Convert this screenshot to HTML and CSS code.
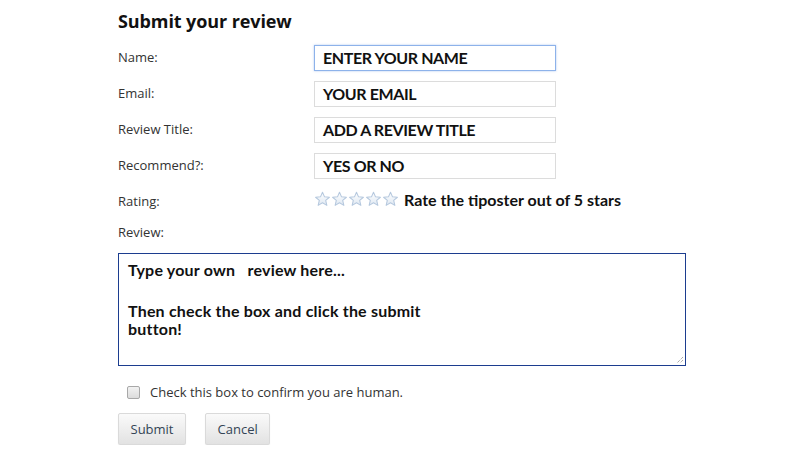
FILE: index.html
```html
<!DOCTYPE html>
<html>
<head>
<meta charset="utf-8">
<link rel="stylesheet" href="styles.css">
</head>
<body>
<form class="review-form">
  <h2 class="title">Submit your review</h2>
  <div class="fields">
    <label class="lbl">Name:</label>
    <div class="inp inp-focus">ENTER YOUR NAME</div>
    <label class="lbl">Email:</label>
    <div class="inp">YOUR EMAIL</div>
    <label class="lbl">Review Title:</label>
    <div class="inp">ADD A REVIEW TITLE</div>
    <label class="lbl">Recommend?:</label>
    <div class="inp">YES OR NO</div>
    <label class="lbl">Rating:</label>
    <div class="rating">
      <span class="stars">
        <svg viewBox="0 0 16 16" class="star"><defs><linearGradient id="sg" x1="0" y1="0" x2="0" y2="1"><stop offset="0" stop-color="#ffffff"/><stop offset="1" stop-color="#dfe8f2"/></linearGradient></defs><path d="M8 1.2l1.9 4.3 4.6.4-3.5 3 1.1 4.6L8 11.1l-4.1 2.4 1.1-4.6-3.5-3 4.6-.4z" fill="url(#sg)" stroke="#b5c8de" stroke-width="1" stroke-linejoin="round"/></svg>
        <svg viewBox="0 0 16 16" class="star"><path d="M8 1.2l1.9 4.3 4.6.4-3.5 3 1.1 4.6L8 11.1l-4.1 2.4 1.1-4.6-3.5-3 4.6-.4z" fill="url(#sg)" stroke="#b5c8de" stroke-width="1" stroke-linejoin="round"/></svg>
        <svg viewBox="0 0 16 16" class="star"><path d="M8 1.2l1.9 4.3 4.6.4-3.5 3 1.1 4.6L8 11.1l-4.1 2.4 1.1-4.6-3.5-3 4.6-.4z" fill="url(#sg)" stroke="#b5c8de" stroke-width="1" stroke-linejoin="round"/></svg>
        <svg viewBox="0 0 16 16" class="star"><path d="M8 1.2l1.9 4.3 4.6.4-3.5 3 1.1 4.6L8 11.1l-4.1 2.4 1.1-4.6-3.5-3 4.6-.4z" fill="url(#sg)" stroke="#b5c8de" stroke-width="1" stroke-linejoin="round"/></svg>
        <svg viewBox="0 0 16 16" class="star"><path d="M8 1.2l1.9 4.3 4.6.4-3.5 3 1.1 4.6L8 11.1l-4.1 2.4 1.1-4.6-3.5-3 4.6-.4z" fill="url(#sg)" stroke="#b5c8de" stroke-width="1" stroke-linejoin="round"/></svg>
      </span>
      <span class="rate-text">Rate the tiposter out of 5 stars</span>
    </div>
  </div>
  <div class="lbl review-lbl">Review:</div>
  <div class="textarea">
    <div>Type your own&nbsp;&nbsp; review here...</div>
    <div class="blank">&nbsp;</div>
    <div>Then check the box and click the submit</div>
    <div>button!</div>
    <svg class="grip" viewBox="0 0 10 10"><path d="M9 3L3 9M9 6L6 9" stroke="#888" stroke-width="1" stroke-dasharray="1 1"/></svg>
  </div>
  <div class="check-row">
    <span class="checkbox"></span>
    <span class="check-text">Check this box to confirm you are human.</span>
  </div>
  <div class="buttons">
    <span class="btn">Submit</span>
    <span class="btn">Cancel</span>
  </div>
</form>
</body>
</html>
```
FILE: styles.css
```css
html, body { margin: 0; padding: 0; background: #fff; }
body { font-family: "Open Sans", "DejaVu Sans", sans-serif; }
.review-form { margin-left: 118px; width: 568px; padding-top: 9px; }
.title { margin: 0 0 12px 0; font-size: 18px; line-height: 24px; font-weight: 700; color: #111; letter-spacing: -0.1px; }
.fields { display: grid; grid-template-columns: 196px 242px; grid-auto-rows: 26px; row-gap: 10px; align-items: center; }
.lbl { font-size: 13px; color: #333; line-height: 18px; padding-bottom: 3px; }
.inp { box-sizing: border-box; height: 26px; border: 1px solid #dcdcdc; padding: 0 0 1px 8px; display: flex; align-items: center; font-family: "Lato", sans-serif; font-weight: 700; font-size: 16px; color: #111; letter-spacing: -0.4px; }
.inp-focus { border-color: #8db2ea; box-shadow: 0 0 2px rgba(120,160,230,0.6); }
.rating { display: flex; align-items: center; gap: 5px; margin-top: -6px; white-space: nowrap; }
.stars { display: flex; gap: 0; }
.star { width: 17px; height: 17px; display: block; }
.rate-text { font-family: "Lato", sans-serif; font-weight: 700; font-size: 16px; color: #111; }
.review-lbl { margin-top: 8px; }
.textarea { position: relative; box-sizing: border-box; margin-top: 9px; height: 113px; border: 1px solid #1c3d8f; padding: 7px 9px; font-family: "Lato", sans-serif; font-weight: 700; font-size: 16px; line-height: 18px; color: #111; letter-spacing: 0.2px; }
.textarea .blank { height: 23px; }
.grip { position: absolute; right: 1px; bottom: 1px; width: 10px; height: 10px; }
.check-row { display: flex; align-items: center; margin-top: 16px; padding-left: 9px; height: 20px; }
.checkbox { box-sizing: border-box; width: 13px; height: 13px; border: 1px solid #a8a8a8; border-radius: 2px; background: linear-gradient(#f2f2f2, #dcdcdc); }
.check-text { margin-left: 10px; font-size: 13px; color: #333; }
.buttons { display: flex; gap: 19px; margin-top: 11px; }
.btn { box-sizing: border-box; height: 32px; padding: 0 11.5px; display: flex; align-items: center; font-size: 13px; color: #334455; border: 1px solid #dadada; border-radius: 2px; background: linear-gradient(#fafafa, #e2e2e2); box-shadow: 0 1px 1px rgba(0,0,0,0.08); }
```
